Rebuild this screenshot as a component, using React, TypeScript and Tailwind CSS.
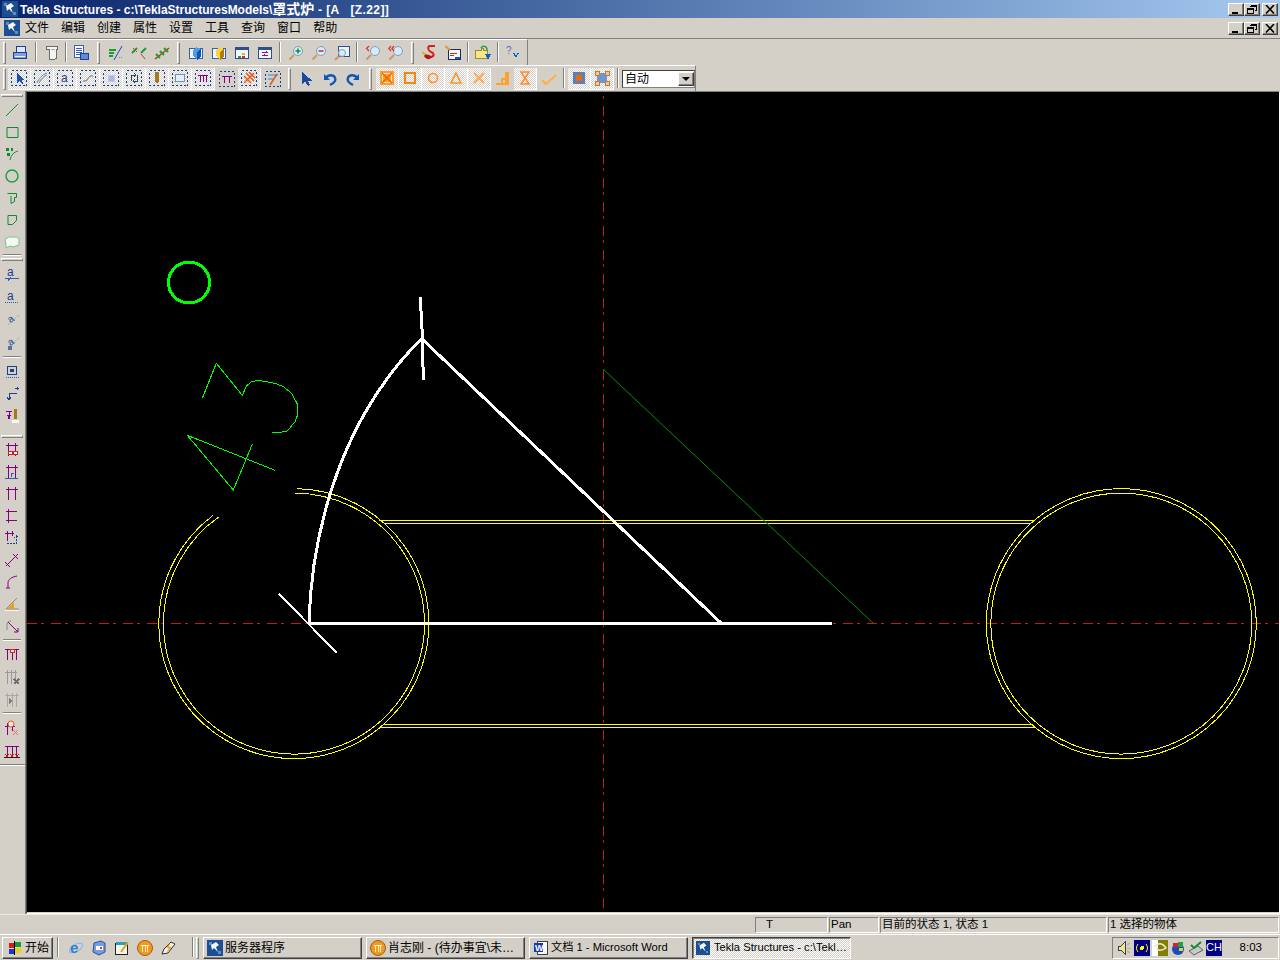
import type { ReactNode } from "react";

const raised =
  "border-t border-l border-t-white border-l-white border-r border-b border-r-[#404040] border-b-[#404040] shadow-[inset_-1px_-1px_0_#808080]";
const dither =
  "bg-[repeating-conic-gradient(#ffffff_0%_25%,#d4d0c8_0%_50%)] bg-size-[2px_2px]";

function I({ children, size = 16 }: { children: ReactNode; size?: number }) {
  return (
    <svg width={size} height={size} viewBox="0 0 16 16" fill="none" shapeRendering="crispEdges">
      {children}
    </svg>
  );
}

function Btn({ children, on }: { children: ReactNode; on?: boolean }) {
  return (
    <div
      className={
        on
          ? `flex h-[22px] w-[23px] shrink-0 items-center justify-center border-r border-b border-white ${dither}`
          : "flex h-[22px] w-[23px] shrink-0 items-center justify-center"
      }
    >
      {children}
    </div>
  );
}

function Grip({ w }: { w: string }) {
  return (
    <div className={`flex h-[22px] shrink-0 justify-center ${w}`}>
      <div className="h-[22px] w-[3px] border border-t-white border-l-white border-r-[#808080] border-b-[#808080]" />
    </div>
  );
}

function Sep({ w }: { w: string }) {
  return (
    <div className={`flex h-[22px] shrink-0 justify-center ${w}`}>
      <div className="h-[20px] w-[2px] border-r border-l border-r-white border-l-[#808080]" />
    </div>
  );
}

function Mag({ children }: { children?: ReactNode }) {
  return (
    <I>
      <g shapeRendering="auto">
        <line x1="6" y1="10" x2="1.5" y2="14.5" stroke="#c79a63" strokeWidth="2" />
        <circle cx="10" cy="6" r="4.5" fill="#d6eafc" stroke="#7e9dbd" />
        {children}
      </g>
    </I>
  );
}

function Sel({ children }: { children?: ReactNode }) {
  return (
    <I>
      <rect x=".5" y=".5" width="15" height="15" stroke="#0a3fa8" strokeDasharray="2 2" />
      {children}
    </I>
  );
}

const P = "#800080";
const G = "#108a30";
const B = "#1c3f94";
const O = "#ff9020";

function Pi({ children }: { children?: ReactNode }) {
  return (
    <I>
      <path d="M2 3.5H14M4.5 1V14M11.5 1V14" stroke={P} />
      {children}
    </I>
  );
}

function Cube({ c, d }: { c: string; d: string }) {
  return (
    <I>
      <rect x="1.5" y="3.5" width="13" height="10" fill="#eef4fb" stroke="#3a5f9a" />
      <path d="M8 2L13 4V11L9 15L5 11V5Z" fill={c} />
      <path d="M9 7L13 4V11L9 15Z" fill={d} />
    </I>
  );
}

function Row1() {
  return (
    <div className="flex h-[26px] w-[528px] items-center border-t border-r border-t-white border-r-[#808080] pl-[3px]">
      <Grip w="w-[3px] mr-[2px]" />
      <Btn>
        <I>
          <path d="M4.5 1.5H13.5V7.5H4.5Z" fill="#dde6f6" stroke="#1c3f94" />
          <path d="M1.5 7.5H14.5V13.5H1.5Z" fill="#7f9fe0" stroke="#1c3f94" />
          <path d="M3 11H13" stroke="#f2f2f2" />
        </I>
      </Btn>
      <Sep w="w-[9px]" />
      <Btn>
        <I>
          <path d="M2.5 1.5H13.5V4.5H12.5V13.5L9.5 14.5H5.5V4.5H2.5Z" fill="#f4f4f4" stroke="#6c6c6c" />
          <path d="M7 4H11" stroke="#b0b0b0" />
        </I>
      </Btn>
      <Sep w="w-[6px]" />
      <Btn>
        <I>
          <path d="M1.5 .5H10.5V12.5H1.5Z" fill="#f7f9ff" stroke="#3f5fa8" />
          <path d="M3 3H9M3 5H9M3 7H9M3 9H9" stroke="#2f5fc0" />
          <path d="M7.5 8.5H15.5V14.5H7.5Z" fill="#5f88d8" stroke="#1c3f94" />
        </I>
      </Btn>
      <Grip w="w-[12px]" />
      <Btn>
        <I>
          <path d="M1 5H8M1 8H6M1 11H5" stroke="#16a030" strokeWidth="2" />
          <path d="M14 1L6 15" stroke="#2040e0" shapeRendering="auto" />
          <path d="M11 12H15" stroke="#8a8a8a" strokeDasharray="1 1" />
        </I>
      </Btn>
      <Btn>
        <I>
          <g shapeRendering="auto">
            <path d="M1 8L6 3M10 8L15 3" stroke="#16a030" strokeWidth="2" />
            <path d="M2 3L6 7M10 9L14 14" stroke="#e03030" />
          </g>
        </I>
      </Btn>
      <Btn>
        <I>
          <g shapeRendering="auto">
            <path d="M1 14L15 3" stroke="#d02828" strokeWidth="1.5" />
            <path d="M2 9L6 13M6 6L10 10M10 3L14 7" stroke="#16a030" strokeWidth="2" />
          </g>
        </I>
      </Btn>
      <Grip w="w-[11px]" />
      <Btn><Cube c="#4f9be8" d="#0f56b0" /></Btn>
      <Btn><Cube c="#ffd23c" d="#b07c10" /></Btn>
      <Btn>
        <I>
          <rect x="1.5" y="2.5" width="13" height="11" fill="#f2f6fc" stroke="#2d4f90" />
          <path d="M2 3H14V5H2Z" fill="#2d4f90" />
          <rect x="8" y="8" width="3" height="2" fill="#d0c010" />
          <rect x="4" y="11" width="3" height="2" fill="#18a040" />
          <rect x="8" y="11" width="3" height="2" fill="#e02828" />
        </I>
      </Btn>
      <Btn>
        <I>
          <rect x="1.5" y="2.5" width="13" height="11" fill="#f2f6fc" stroke="#2d4f90" />
          <path d="M2 3H14V5H2Z" fill="#2d4f90" />
          <path d="M5 7H11M9 6V8M5 10H11M7 9V11" stroke="#901090" />
        </I>
      </Btn>
      <Sep w="w-[8px]" />
      <Btn><Mag><path d="M7.5 6H12.5M10 3.5V8.5" stroke="#109030" strokeWidth="1.5" /></Mag></Btn>
      <Btn><Mag><path d="M7.5 6H12.5" stroke="#d02828" strokeWidth="1.5" /></Mag></Btn>
      <Btn>
        <I>
          <rect x="4.5" y="1.5" width="11" height="10" fill="#eaf3fc" stroke="#2d4f90" />
          <g shapeRendering="auto">
            <line x1="5" y1="11" x2="1" y2="15" stroke="#c79a63" strokeWidth="2" />
            <circle cx="8" cy="8" r="3.5" fill="#d6eafc" stroke="#7e9dbd" />
          </g>
        </I>
      </Btn>
      <Sep w="w-[8px]" />
      <Btn><Mag><path d="M4 1L1.5 3.5L4 6" stroke="#e03028" strokeWidth="1.2" /></Mag></Btn>
      <Btn><Mag><path d="M3 1L.8 3.5L3 6M6 1L3.8 3.5L6 6" stroke="#e03028" strokeWidth="1.2" /></Mag></Btn>
      <Grip w="w-[11px]" />
      <Btn>
        <I>
          <g shapeRendering="auto">
            <path d="M13 1H8C5 1 6 6 9 7C12 8 13 11 9 12" stroke="#d82020" strokeWidth="2" />
            <path d="M0 7L4 10" stroke="#d8b020" strokeWidth="2" />
            <path d="M2 11C4 8 8 10 10 12C8 15 4 15 2 11Z" fill="#b01818" />
          </g>
        </I>
      </Btn>
      <Btn>
        <I>
          <rect x="3.5" y="4.5" width="12" height="10" fill="#f4f6fc" stroke="#202a5c" />
          <path d="M5 8H12M5 10H9" stroke="#a03030" />
          <path d="M10 12H15V14H10Z" fill="#2050c0" />
          <path d="M0 1L5 5" stroke="#d8a020" strokeWidth="2" shapeRendering="auto" />
        </I>
      </Btn>
      <Sep w="w-[7px]" />
      <Btn>
        <I>
          <path d="M.5 5.5H6.5V3.5H8.5V5.5H12.5V13.5H.5Z" fill="#f4e68a" stroke="#9a8a30" />
          <path d="M6 3C8 0 12 1 12 5" stroke="#20a040" strokeWidth="1.4" shapeRendering="auto" />
          <path d="M10 9H16L13 15Z" fill="#1060c0" />
        </I>
      </Btn>
      <Sep w="w-[7px]" />
      <Btn>
        <I>
          <text x="1" y="9" fontSize="10" fill="#5070c0">?</text>
          <path d="M8 8H14L11 13Z" fill="#1060c0" />
          <path d="M10 8H12V10H10Z" fill="#a0d0ff" />
        </I>
      </Btn>
    </div>
  );
}

function Row2() {
  return (
    <div className="flex h-[26px] w-[696px] items-center border-t border-r border-t-white border-r-[#808080] pl-[3px]">
      <Grip w="w-[3px] mr-[2px]" />
      <Btn on><Sel><path d="M6 3V13L8.5 10.5L11 14L12.5 13L10 9.5H13.5Z" fill="#1d4fa8" /></Sel></Btn>
      <Btn on><Sel><path d="M3 13C5 8 8 5 13 3M5 13C7 9 10 6 13 5" stroke="#5f88c0" shapeRendering="auto" /></Sel></Btn>
      <Btn on><Sel><text x="4" y="12" fontSize="12" fill="#20408f">a</text></Sel></Btn>
      <Btn on><Sel><path d="M3 11H6L10 6H13" stroke="#5a6f90" shapeRendering="auto" /></Sel></Btn>
      <Btn on><Sel><rect x="5" y="5" width="6" height="6" fill="#a8b8e8" stroke="#c0c8e8" /></Sel></Btn>
      <Btn on><Sel><path d="M5 11V5H10M8 3L10 5L8 7M11 5V11H7M9 9L7 11L9 13" stroke="#20408f" /></Sel></Btn>
      <Btn on><Sel><path d="M6 2H10V11L8 14L6 11Z" fill="#a87818" /></Sel></Btn>
      <Btn on><Sel><rect x="3.5" y="4.5" width="9" height="7" fill="#e8effa" stroke="#6f8fc8" /></Sel></Btn>
      <Btn on><Sel><path d="M3 5H13M5 5V12M8 5V12M11 5V12" stroke={P} /></Sel></Btn>
      <Btn><Sel><path d="M3 5H13M5.5 5V12M10.5 5V12" stroke={P} /></Sel></Btn>
      <Btn on>
        <Sel>
          <g shapeRendering="auto">
            <path d="M3 13L13 3M5 3L13 11M3 6L10 13M8 2L14 8" stroke="#e05a18" strokeWidth="1.5" />
          </g>
        </Sel>
      </Btn>
      <Btn>
        <Sel>
          <g shapeRendering="auto">
            <path d="M3 4H13M3 8H8" stroke="#2090d8" />
            <path d="M5 14L12 3" stroke="#e05a18" strokeWidth="1.5" />
          </g>
        </Sel>
      </Btn>
      <Grip w="w-[11px]" />
      <Btn>
        <I><path d="M3 1V13L6 10.5L9 15L11 14L8.5 9.5H13Z" fill="#1c4a9c" /></I>
      </Btn>
      <Btn>
        <I>
          <g shapeRendering="auto">
            <path d="M2 3V9H8" fill="#1058b8" />
            <path d="M3 8C7 2 15 4 13 10C12 12 10 13 8 14" stroke="#1058b8" strokeWidth="2.4" />
          </g>
        </I>
      </Btn>
      <Btn>
        <I>
          <g shapeRendering="auto">
            <path d="M14 3V9H8" fill="#1058b8" />
            <path d="M13 8C9 2 1 4 3 10C4 12 6 13 8 14" stroke="#1058b8" strokeWidth="2.4" />
          </g>
        </I>
      </Btn>
      <Grip w="w-[12px]" />
      <Btn on>
        <I>
          <rect x="1" y="1" width="14" height="14" fill="#ff9a2e" />
          <rect x="3.5" y="3.5" width="9" height="9" stroke="#ffe0b0" />
          <path d="M3 3L13 13M13 3L3 13" stroke="#e86a00" strokeWidth="1.5" shapeRendering="auto" />
        </I>
      </Btn>
      <Btn on><I><rect x="3" y="3" width="10" height="10" stroke="#ff8210" strokeWidth="2" /></I></Btn>
      <Btn on><I><circle cx="8" cy="8" r="4.5" stroke={O} strokeWidth="1.5" shapeRendering="auto" /></I></Btn>
      <Btn on><I><path d="M8 3L13 13H3Z" stroke={O} strokeWidth="1.5" shapeRendering="auto" /></I></Btn>
      <Btn on><I><path d="M3 3L13 13M13 3L3 13" stroke="#ffa858" strokeWidth="2" shapeRendering="auto" /></I></Btn>
      <Btn>
        <I>
          <path d="M1 12H13V14H1Z" fill="#ffa030" />
          <path d="M7 12V8H11M11 2H13V13H11Z" stroke="#ffa030" strokeWidth="1.5" />
        </I>
      </Btn>
      <Btn on>
        <I>
          <path d="M4 2H12L4 14H12Z M4 2L12 14" stroke="#ff8a28" strokeWidth="1.4" shapeRendering="auto" />
        </I>
      </Btn>
      <Btn>
        <I><path d="M1 9L5 13L15 4" stroke="#ffb040" strokeWidth="2" shapeRendering="auto" /></I>
      </Btn>
      <Sep w="w-[8px]" />
      <Btn on>
        <I>
          <rect x="2" y="2" width="12" height="12" fill="#5f7fb0" />
          <rect x="5" y="5" width="6" height="6" fill="#e86a10" />
        </I>
      </Btn>
      <Btn on>
        <I>
          <rect x="3" y="3" width="10" height="10" fill="#6a9ad0" />
          <path d="M1 1H5V5H1ZM11 1H15V5H11ZM1 11H5V15H1ZM11 11H15V15H11Z" fill="#d4d0c8" stroke="#e87010" />
        </I>
      </Btn>
      <Sep w="w-[8px]" />
      <div className="flex h-[18px] w-[73px] shrink-0 items-center border border-t-[#404040] border-l-[#404040] border-r-[#808080] border-b-[#808080] bg-white pl-[2px] text-[12px] text-black">
        <span className="flex-1">自动</span>
        <div className={`flex h-[14px] w-[16px] items-center justify-center bg-[#d4d0c8] ${raised}`}>
          <div className="h-0 w-0 border-x-[4px] border-t-[4px] border-x-transparent border-t-black" />
        </div>
      </div>
    </div>
  );
}

function Side({ children, h = "h-[22px]" }: { children: ReactNode; h?: string }) {
  return <div className={`flex w-[24px] shrink-0 items-center justify-center ${h}`}>{children}</div>;
}

function SideBar() {
  const g = (d: string) => (
    <I>
      <path d={d} stroke={G} shapeRendering="auto" />
    </I>
  );
  const bar = (
    <div className="mx-[1px] my-[1px] h-[3px] w-[22px] shrink-0 border border-t-white border-l-white border-r-[#808080] border-b-[#808080]" />
  );
  const line = <div className="mx-[3px] my-[1px] h-[2px] w-[18px] shrink-0 border-t border-b border-t-[#808080] border-b-white" />;
  return (
    <div className="flex w-[26px] shrink-0 flex-col border-r border-r-[#808080] pt-[2px]">
      <div className="h-[3px]">{bar}</div>
      <div className="h-[3px]" />
      <Side>{g("M2 14L14 2")}</Side>
      <Side>{g("M3 3.5H14V13.5H3Z")}</Side>
      <Side>
        <I>
          <path d="M2 2H5V5H2ZM7 2H9V5H7ZM3 7H6V10H3Z" fill="#108a30" />
          <path d="M6 14C7 9 10 6 14 5" stroke={G} shapeRendering="auto" />
        </I>
      </Side>
      <Side><I><circle cx="8" cy="8" r="6" stroke="#18a038" strokeWidth="1.4" shapeRendering="auto" /></I></Side>
      <Side>{g("M3.5 3.5H12.5V7.5H10.5V11.5L7 13.5V6")}</Side>
      <Side>{g("M4 3.5H12.5V8.5L8.5 12.5H4Z")}</Side>
      <Side h="h-[21px]">
        <I>
          <path d="M1 5L5 3H13L15 5V11L12 12L9 13L6 12L2 14V11Z" fill="#f4f8f0" stroke="#7fc090" shapeRendering="auto" />
        </I>
      </Side>
      <div className="mt-[1px]">{line}</div>
      {bar}
      <Side h="h-[23px]">
        <I>
          <text x="3" y="10" fontSize="12" fill={B}>a</text>
          <path d="M1 12.5H15M4 15L7 11" stroke="#2d5fb0" />
        </I>
      </Side>
      <Side h="h-[23px]">
        <I>
          <text x="3" y="11" fontSize="12" fill={B}>a</text>
          <path d="M1 13.5H15" stroke="#2d5fb0" strokeDasharray="1 1" />
        </I>
      </Side>
      <Side h="h-[23px]">
        <I>
          <text x="4" y="10" fontSize="10" fill={B} transform="rotate(-35 7 7)">a</text>
          <path d="M4 13L15 3" stroke="#7f9fd0" strokeDasharray="1 1" shapeRendering="auto" />
        </I>
      </Side>
      <Side h="h-[23px]">
        <I>
          <text x="4" y="10" fontSize="10" fill={B} transform="rotate(-35 7 7)">a</text>
          <path d="M4 13L15 3" stroke="#7f9fd0" strokeDasharray="1 1" shapeRendering="auto" />
          <path d="M4 11H8V15H4Z" fill="#5f6fa0" />
        </I>
      </Side>
      <div className="mt-[1px]">{line}</div>
      <div className="h-[2px]" />
      <Side>
        <I>
          <rect x="3.5" y="2.5" width="9" height="8" stroke={B} />
          <rect x="6" y="5" width="4" height="3" fill={B} />
          <path d="M2 13.5H15" stroke="#2d5fb0" strokeDasharray="1 1" />
        </I>
      </Side>
      <Side>
        <I>
          <path d="M5 14V7H13M3 11L5 14L7 11M11 2H15M13 1V4" stroke={B} />
        </I>
      </Side>
      <Side>
        <I>
          <path d="M2 3H8M5 3V11" stroke={P} />
          <path d="M3 7H7L5 12Z" fill={P} />
          <path d="M10 1H13V11H10Z" fill="#a87818" />
          <path d="M8 12H15V15H8Z" fill="#f8f8f8" />
        </I>
      </Side>
      <div className="h-[7px]" />
      <div className="h-[3px]">{bar}</div>
      <div className="h-[2px]" />
      <Side>
        <Pi>
          <path d="M4 9H8V12H4Z" fill="#f8f8f8" stroke="#d02020" />
          <path d="M9 9H13V12H9Z" fill="#f8f8f8" stroke="#d02020" />
        </Pi>
      </Side>
      <Side>
        <Pi>
          <path d="M1 14H14" stroke="#2d5fb0" />
          <path d="M7 13V9H10" stroke="#2d5fb0" />
        </Pi>
      </Side>
      <Side><Pi /></Side>
      <Side><I><path d="M2 3.5H13M2 12.5H13M4.5 1V15" stroke={P} /></I></Side>
      <Side>
        <I>
          <path d="M1 3.5H10M3.5 1V11M8.5 1V6" stroke={P} />
          <path d="M3 13.5H12M12.5 6V14M10 8L12.5 6L15 8" stroke={B} strokeDasharray="2 1" />
        </I>
      </Side>
      <Side>
        <I>
          <g shapeRendering="auto">
            <path d="M2 14L14 2" stroke={P} />
            <path d="M1 10L6 15M9 2L14 7" stroke={P} />
          </g>
        </I>
      </Side>
      <Side><I><path d="M4 14V9C4 5 8 3 13 2M2 14H6" stroke={P} shapeRendering="auto" /></I></Side>
      <Side>
        <I>
          <g shapeRendering="auto">
            <path d="M2 13L13 2M2 13H15" stroke="#8a8a8a" />
            <path d="M3 13L10 6V13Z" fill="#e8a020" />
            <path d="M1 14H15V15H1Z" fill="#f6f6f6" />
          </g>
        </I>
      </Side>
      <Side>
        <I>
          <g shapeRendering="auto">
            <path d="M3 12V6C3 4 5 3 7 3" stroke="#8a8a8a" />
            <path d="M4 4L14 14M14 10V14H10" stroke={P} />
          </g>
        </I>
      </Side>
      <div className="mt-[1px]">{line}</div>
      <Side h="h-[23px]">
        <I>
          <path d="M1 3.5H15M3.5 3V14M8 3V14M12.5 3V14" stroke={P} />
          <rect x="6" y="3" width="4" height="3" fill="#f0e0e0" stroke="#e02020" />
        </I>
      </Side>
      <Side h="h-[23px]">
        <I>
          <path d="M1 3.5H13M3.5 1V15M7.5 1V15M11.5 1V10" stroke="#9a9a9a" />
          <path d="M10 10L15 15M15 10L10 15" stroke="#707070" strokeWidth="2" />
        </I>
      </Side>
      <Side h="h-[23px]">
        <I>
          <path d="M1 3.5H15M3.5 1V15M8.5 1V15M12.5 1V15" stroke="#a8a8a8" />
          <path d="M5 6L8 9L5 12Z" fill="#808080" />
        </I>
      </Side>
      {line}
      <div className="h-[1px]" />
      <Side h="h-[23px]">
        <I>
          <path d="M1 6H11M3.5 3V15M8 6V11" stroke={P} />
          <circle cx="7" cy="4" r="3" fill="#f4e8e0" stroke="#e8582a" shapeRendering="auto" />
          <path d="M9 10L14 15M14 10L9 15" stroke="#f07050" shapeRendering="auto" />
        </I>
      </Side>
      <Side h="h-[23px]">
        <I>
          <path d="M1 3.5H15M3.5 3V13M8 3V13M12.5 3V13" stroke={P} />
          <path d="M1 11L5 15M5 11L1 15M6 11L10 15M10 11L6 15M11 11L15 15M15 11L11 15" stroke="#e01010" />
          <path d="M0 14H16" stroke="#202020" />
        </I>
      </Side>
      <div className="mt-[2px] h-[2px] w-[25px] border-t border-b border-t-[#808080] border-b-white" />
    </div>
  );
}

function Canvas() {
  const y = "#ffff00";
  return (
    <div className="flex-1 border-t border-l border-r border-b border-t-[#808080] border-l-[#404040] border-r-white border-b-white">
      <svg
        className="block h-[820px] w-[1252px] bg-black"
        viewBox="27 92 1252 820"
        fill="none"
        shapeRendering="crispEdges"
      >
        <path d="M27 623.5H1279" stroke="#c81818" strokeDasharray="10 4 3 7" />
        <path d="M603.5 82V912" stroke="#c81818" strokeDasharray="10 4 3 7" />
        <path d="M297 488.6A135 135 0 1 1 212.8 515.6" stroke={y} />
        <path d="M295.3 493.1A130.5 130.5 0 1 1 218.7 517" stroke={y} />
        <circle cx="1121.3" cy="623.6" r="135" stroke={y} />
        <circle cx="1121.3" cy="623.6" r="130.5" stroke={y} />
        <path d="M379 520.5H1035M384 523.5H1031M379 727.5H1035M384 724.5H1031" stroke={y} />
        <path d="M603 369L873 623" stroke="#009000" shapeRendering="auto" />
        <circle cx="189" cy="282.5" r="20.5" stroke="#00ff00" strokeWidth="3" />
        <path
          d="M202.3 398.3L216.3 363.3L242.3 395.3L246.7 385.7L251.7 381.7L258.3 380.3L275 383.3L283.3 386.7L291.7 393.3L297.3 404V415.7L295 421.7L286.7 431.7L272.3 432.7"
          stroke="#00ff00"
        />
        <path d="M275 470.3L187.3 435.3L233.3 490L252.3 444.3" stroke="#00ff00" />
        <g stroke="#ffffff">
          <path d="M308 623H832" strokeWidth="3" />
          <path d="M279 594L337 653" strokeWidth="2" />
          <path d="M309 623C311 540 335 460 372.7 400Q398 360.5 422 339" strokeWidth="3" />
          <path d="M420.5 297V311M421.7 311L422.7 367M423.3 367V380" strokeWidth="3" />
          <path d="M422 339L721 623" strokeWidth="3" />
        </g>
      </svg>
    </div>
  );
}

function StatusCell({ w, children }: { w: string; children?: ReactNode }) {
  return (
    <div
      className={`flex h-[16px] shrink-0 items-center border border-t-[#808080] border-l-[#808080] border-r-white border-b-white pl-[1px] text-[11.5px] leading-none text-black ${w}`}
    >
      {children}
    </div>
  );
}

function Task({ w, children, active }: { w: string; children: ReactNode; active?: boolean }) {
  return (
    <div
      className={
        active
          ? `flex h-[22px] shrink-0 items-center gap-[2px] border border-t-[#404040] border-l-[#404040] border-r-white border-b-white px-[3px] text-[11.2px] whitespace-nowrap text-black shadow-[inset_1px_1px_0_#808080] ${dither} ${w}`
          : `flex h-[22px] shrink-0 items-center gap-[2px] px-[3px] text-[11.2px] whitespace-nowrap text-black ${raised} ${w}`
      }
    >
      {children}
    </div>
  );
}

function TeklaLogo({ size = 16 }: { size?: number }) {
  return (
    <I size={size}>
      <rect width="16" height="16" fill="#1c4f92" />
      <path d="M2 2H5V5H2ZM11 11H14V14H11Z" fill="#5c8ec4" />
      <path d="M4 5L9 2L12 5L9 7L11 12L7 8L5 10Z" fill="#f2f6fb" shapeRendering="auto" />
    </I>
  );
}

function SunFace() {
  return (
    <I>
      <circle cx="8" cy="8" r="7.5" fill="#f09a20" stroke="#a85a10" shapeRendering="auto" />
      <path d="M4 5H12M5.5 5V12M8 5V12M10.5 5V12" stroke="#fff0c0" />
    </I>
  );
}

function Taskbar() {
  return (
    <div className="flex h-[26px] items-center border-t border-t-white pl-[2px]">
      <div className={`flex h-[22px] w-[51px] shrink-0 items-center gap-[2px] pl-[4px] text-[12px] text-black ${raised}`}>
        <I>
          <path d="M2 3H7V8H2Z" fill="#e01818" />
          <path d="M8 2H14V7H8Z" fill="#10a030" />
          <path d="M2 9H7V14H2Z" fill="#1838d0" />
          <path d="M8 8H14V13H8Z" fill="#f0d010" />
          <path d="M7.5 1V15" stroke="#000" />
        </I>
        开始
      </div>
      <Sep w="w-[10px]" />
      <div className="w-[4px] shrink-0" />
      <div className="flex w-[123px] shrink-0 items-center gap-[7px] pl-[1px]">
        <I>
          <ellipse cx="8" cy="8" rx="7.5" ry="3.5" stroke="#7fb8ea" transform="rotate(-30 8 8)" shapeRendering="auto" />
          <text x="2" y="13" fontSize="15" fontWeight="700" fill="#2f7fd8">e</text>
        </I>
        <I>
          <path d="M3 3L10 1L14 3V12L8 15L2 12Z" fill="#6f9fe0" stroke="#2f4f90" shapeRendering="auto" />
          <path d="M5 6H12V10H5Z" fill="#ffffff" />
          <path d="M9 7H11V9H9Z" fill="#e03030" />
        </I>
        <I>
          <rect x="1.5" y="3.5" width="12" height="11" fill="#f8f8e8" stroke="#202020" />
          <path d="M2 2H14V5H2Z" fill="#28a0c0" />
          <path d="M7 12L14 2" stroke="#e0a020" strokeWidth="2" shapeRendering="auto" />
        </I>
        <SunFace />
        <I>
          <path d="M4 9L11 2L15 4L8 13L2 14Z" fill="#f2f2f2" stroke="#303030" shapeRendering="auto" />
          <path d="M10 3L6 8H9L6 13L12 7H9Z" fill="#f0a010" shapeRendering="auto" />
        </I>
      </div>
      <Sep w="w-[5px]" />
      <Grip w="w-[5px]" />
      <div className="w-[3px] shrink-0" />
      <Task w="w-[159px] mr-[4px]">
        <TeklaLogo />
        <span className="text-[12px]">服务器程序</span>
      </Task>
      <Task w="w-[159px] mr-[4px]">
        <SunFace />
        <span className="text-[12px]">肖志刚 - (待办事宜\未…</span>
      </Task>
      <Task w="w-[159px] mr-[4px]">
        <I>
          <rect x="4.5" y="1.5" width="10" height="13" fill="#f8f8f8" stroke="#404040" />
          <rect x="1" y="3" width="9" height="9" fill="#1838b0" />
          <text x="2" y="11" fontSize="9" fontWeight="700" fill="#ffffff">W</text>
        </I>
        <span>文档 1 - Microsoft Word</span>
      </Task>
      <Task w="w-[159px]" active>
        <TeklaLogo />
        <span className="ml-[2px]">Tekla Structures - c:\Tekl…</span>
      </Task>
      <div className="ml-auto mr-[1px] flex h-[22px] w-[167px] items-center gap-[2px] border border-t-[#808080] border-l-[#808080] border-r-white border-b-white pl-[3px] text-[12px] text-black">
        <I>
          <path d="M2 6H5L9 2V14L5 10H2Z" fill="#f0e890" stroke="#404040" />
          <path d="M11 5L14 3M11 8H15M11 11L14 13" stroke="#b0b0b0" />
        </I>
        <I>
          <rect width="16" height="16" fill="#000080" />
          <circle cx="8" cy="8" r="2" fill="#ffff00" />
          <path d="M4 4C2 7 2 9 4 12M12 4C14 7 14 9 12 12" stroke="#ffff00" shapeRendering="auto" />
        </I>
        <I>
          <rect width="16" height="16" fill="#808000" />
          <path d="M0 0H6V16H0Z" fill="#ffffff" />
          <path d="M2 7C6 2 11 3 14 8C10 11 6 11 4 8" stroke="#e8e8d0" strokeWidth="1.5" shapeRendering="auto" />
        </I>
        <I>
          <circle cx="8" cy="9" r="6" fill="#1050c0" shapeRendering="auto" />
          <path d="M3 3H8V7H3Z" fill="#e02020" />
          <path d="M8 2H13V7H8Z" fill="#20a040" />
          <path d="M9 8H13V11H9Z" fill="#f0d010" />
        </I>
        <I>
          <path d="M1 11L10 6L15 10L6 15Z" fill="#c8c8c8" stroke="#606060" shapeRendering="auto" />
          <path d="M3 5L6 8L13 2" stroke="#109030" strokeWidth="2" shapeRendering="auto" />
        </I>
        <div className="flex h-[16px] w-[16px] items-center justify-center bg-[#000080] text-[11px] leading-none text-white">CH</div>
        <span className="ml-auto mr-[16px] text-[11.5px]">8:03</span>
      </div>
    </div>
  );
}

function WinButtons() {
  const cls = `flex h-[13px] w-[16px] items-center justify-center bg-[#d4d0c8] ${raised}`;
  return (
    <div className="ml-auto mr-[2px] flex items-center">
      <div className={cls}>
        <svg width="10" height="9" viewBox="0 0 10 9" shapeRendering="crispEdges">
          <path d="M1 7H7V9H1Z" fill="#000" />
        </svg>
      </div>
      <div className={`${cls} mr-[2px]`}>
        <svg width="10" height="9" viewBox="0 0 10 9" fill="none" shapeRendering="crispEdges">
          <path d="M3.5 .5H9.5V5.5H7.5M3 1H9" stroke="#000" />
          <path d="M.5 3.5H6.5V8.5H.5ZM1 4H6" stroke="#000" />
        </svg>
      </div>
      <div className={cls}>
        <svg width="10" height="9" viewBox="0 0 10 9" fill="none">
          <path d="M1 0L9 8.5M9 0L1 8.5" stroke="#000" strokeWidth="1.6" />
        </svg>
      </div>
    </div>
  );
}

export default function App() {
  return (
    <div className="flex h-[960px] w-[1280px] flex-col overflow-hidden bg-[#d4d0c8] font-['Liberation_Sans','Noto_Sans_CJK_SC',sans-serif]">
      <div className="flex h-[18px] items-center gap-[2px] bg-linear-to-r from-[#0a246a] to-[#a6caf0] pl-[2px] text-[12px] font-bold leading-none whitespace-pre text-white">
        <TeklaLogo />
        <span>
          Tekla Structures - c:\TeklaStructuresModels\<span className="text-[14px]">罩式炉</span>
          <span className="tracking-[0.4px]">{" - [A   [Z.22]]"}</span>
        </span>
        <WinButtons />
      </div>
      <div className="flex h-[20px] items-center pl-[4px] text-[12px] text-black">
        <TeklaLogo />
        <div className="ml-[5px] flex gap-[12px]">
          {["文件", "编辑", "创建", "属性", "设置", "工具", "查询", "窗口", "帮助"].map((m) => (
            <span key={m}>{m}</span>
          ))}
        </div>
        <WinButtons />
      </div>
      <div className="border-t border-t-[#808080]">
        <Row1 />
        <Row2 />
      </div>
      <div className="flex h-[823px]">
        <SideBar />
        <Canvas />
      </div>
      <div className="flex h-[20px] items-center border-t border-t-[#ece9e0] pl-[755px]">
        <StatusCell w="w-[73px] pl-[10px]">T</StatusCell>
        <div className="w-[1px]" />
        <StatusCell w="w-[50px]">Pan</StatusCell>
        <div className="w-[1px]" />
        <StatusCell w="w-[227px]">目前的状态 1, 状态 1</StatusCell>
        <div className="w-[1px]" />
        <StatusCell w="w-[171px]">1 选择的物体</StatusCell>
      </div>
      <Taskbar />
    </div>
  );
}
